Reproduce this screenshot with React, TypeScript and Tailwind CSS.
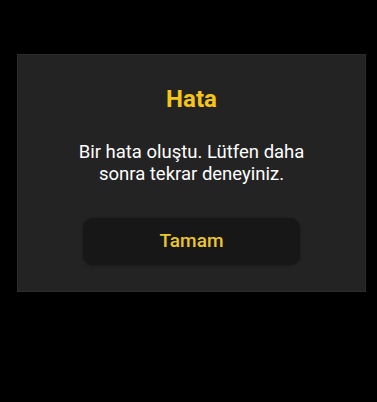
import React from 'react';

export default function App() {
  return (
    <div className="h-[402px] w-full bg-black pt-[54px] px-[17px]" style={{ fontFamily: 'Roboto, "Noto Sans", sans-serif' }}>
      <div className="w-[349px] h-[238px] bg-[#232323] border border-[#2c2c2c] flex flex-col items-center pt-[30px]">
        <h2 className="text-[24px] leading-[28px] font-bold text-[#f5c518]">Hata</h2>
        <p className="mt-[28px] text-[18.5px] leading-[22px] text-white text-center">
          Bir hata oluştu. Lütfen daha<br />sonra tekrar deneyiniz.
        </p>
        <button className="mt-[33px] w-[217px] h-[47px] rounded-[10px] bg-[#171717] text-[19px] font-medium text-[#ecc62c] shadow-[0_1px_3px_rgba(0,0,0,0.3)]">
          Tamam
        </button>
      </div>
    </div>
  );
}
